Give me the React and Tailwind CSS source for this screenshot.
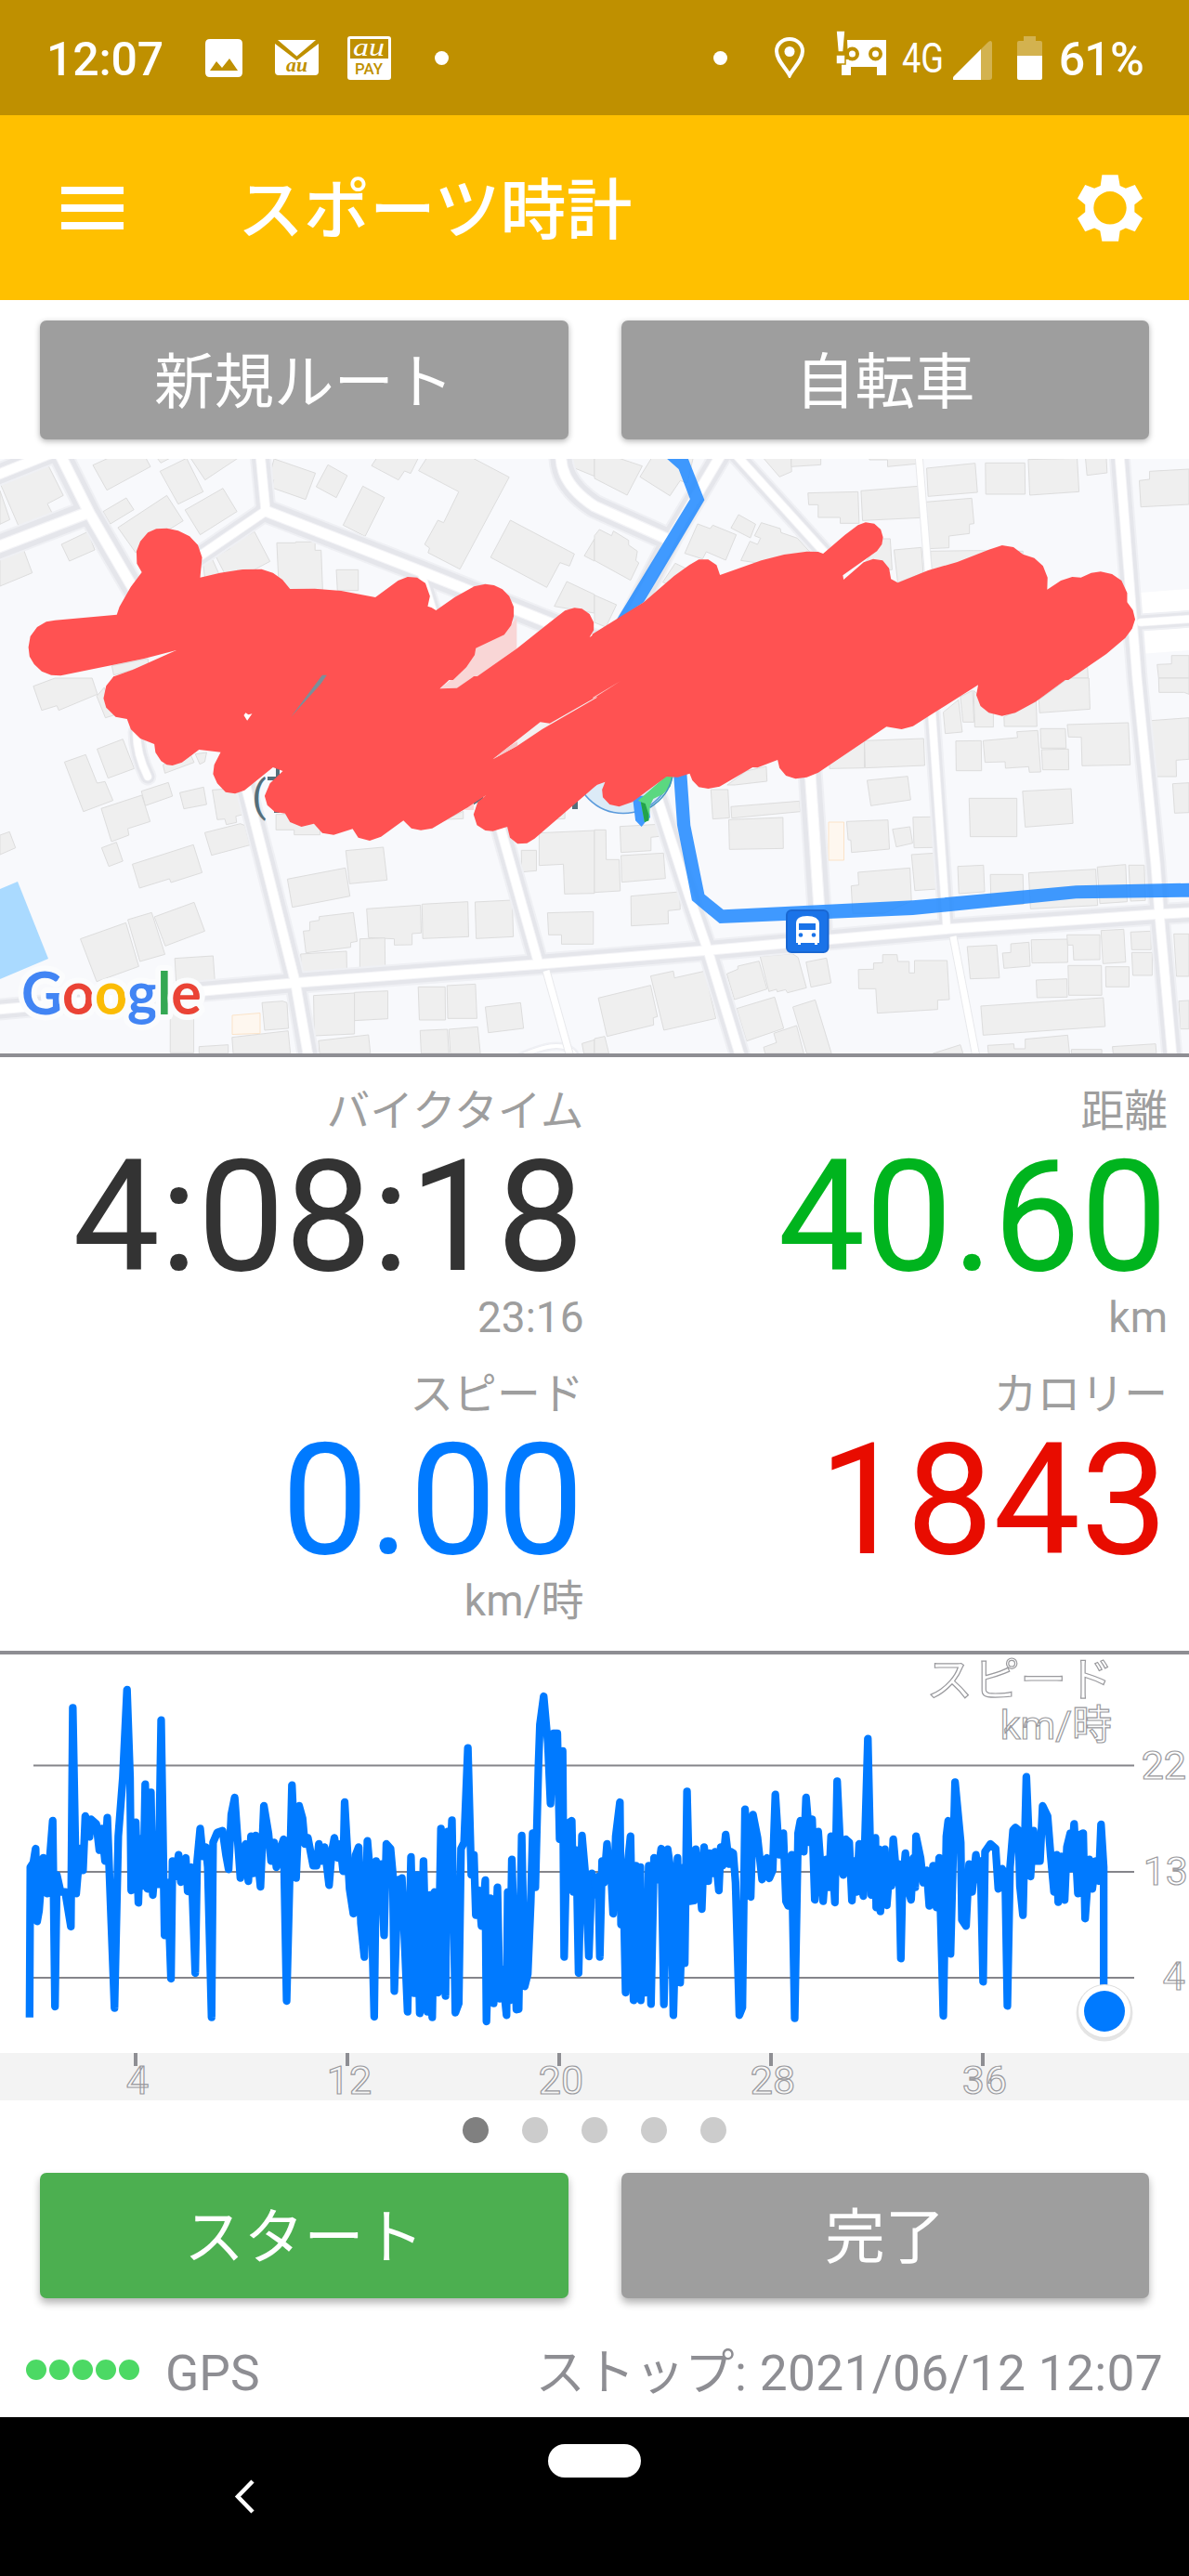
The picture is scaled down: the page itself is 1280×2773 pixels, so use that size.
import { Fragment } from 'react';

// Map shapes are stored per tile, tile units are stretched: 2.45 x 3 per pixel
const TILES = {
  topLeft: 'translate(0 330) scale(0.40816 0.33333)',
  topRight: 'translate(640 330) scale(0.40816 0.33333)',
  bottomLeft: 'translate(0 730) scale(0.40816 0.33333)',
  bottomRight: 'translate(640 730) scale(0.40816 0.33333)',
};

const BUILDINGS = {
  topLeft: [
    '0,570 122,500 167,610 125,637 140,673 54,723',
    '0,595 26,688 0,703',
    '245,512 285,490 385,490 397,517 282,593',
    '415,490 448,490 424,505',
    '422,532 492,490 536,598 470,638',
    '503,490 627,490 541,560',
    '272,662 333,618 353,656 291,702',
    '311,714 440,610 483,692 420,740 358,795',
    '488,657 588,587 625,662 528,737',
    '162,768 232,727 250,786 183,822',
    '0,810 62,784 85,860 0,903',
    '569,806 606,782 606,770 671,727 712,823 640,870 600,880',
    '535,820 557,808 580,870 540,875',
    '723,492 832,538 806,623 717,585 722,560 709,553',
    '865,511 916,546 887,617 834,582',
    '957,580 1014,617 963,742 905,706',
    '980,514 993,490 1103,490 1083,539 1067,531 1051,560',
    '1104,530 1125,490 1248,490 1343,551 1213,848 1129,795 1133,780 1120,768 1155,690 1170,698 1210,598',
    '1346,690 1515,799 1502,838 1477,827 1442,907 1294,810',
    '1495,888 1568,930 1568,990 1462,968',
    '1568,750 1541,805 1568,822',
    '1502,515 1512,490 1568,490 1568,548',
    '730,763 780,763 780,760 831,760 831,787 847,787 851,915 736,915',
    '887,850 945,850 945,917 890,917',
    '295,1160 390,1137 392,1160 300,1190',
  ],
  topRight: [
    '0,555 0,490 65,490 126,515 86,609',
    '120,550 150,490 260,490 245,570 226,562 199,611',
    '0,740 13,720 45,740 50,725 90,755 90,770 113,790 109,820 117,828 95,884 0,820',
    '0,932 58,963 30,1035 0,1020',
    '272,702 305,717 312,706 374,737 346,819 295,792 285,815 238,797',
    '380,672 425,703 411,747 360,715',
    '440,698 490,717 492,730 535,748 570,795 440,830 386,820 410,758 430,768 438,748 422,740',
    '180,890 213,829 240,845 200,900',
    '446,490 518,490 520,533 488,550',
    '519,490 597,490 597,511 519,517',
    '725,495 773,495 773,517 850,508 850,490 725,490',
    '563,602 695,598 698,700 648,700 648,681 590,681 590,640 565,640',
    '703,595 854,580 859,682 707,691',
    '876,522 1004,506 1010,600 880,613',
    '1031,505 1135,505 1136,606 1032,606',
    '1144,494 1273,490 1278,598 1148,609',
    '1295,490 1350,490 1352,537 1299,545',
    '874,631 995,619 1001,701 989,703 989,733 935,741 935,779 880,782',
    '1568,525 1464,532 1464,558 1437,562 1441,647 1568,639',
    '760,750 780,750 785,850 700,850',
    '790,786 862,778 867,860 800,892',
    '886,790 1001,788 1130,790 1130,830 890,850',
    '1568,1127 1522,1127 1522,1154 1484,1156 1488,1200 1568,1200',
    '1300,1160 1302,1200 1250,1200',
  ],
  bottomLeft: [
    '88,26 145,0 243,0 257,52 155,104 150,89 110,104',
    '255,58 275,30 300,120 278,128',
    '256,229 324,197 354,292 285,323',
    '170,271 226,247 256,339 277,334 298,395 220,431',
    '373,365 444,337 455,381 383,412',
    '267,421 374,378 396,463 337,486 340,507 294,528',
    '268,548 307,530 324,591 287,608',
    '0,507 25,496 41,548 0,570',
    '474,370 537,352 545,408 485,422',
    '430,280 500,240 512,272 435,307',
    '515,245 545,240 540,270 527,278',
    '560,361 635,355 642,440 622,446 624,466 597,473 593,455 573,457',
    '540,499 634,470 646,476 659,539 558,572',
    '349,601 510,538 533,628 451,660 447,648 368,678',
    '212,842 332,790 366,931 255,980',
    '337,780 400,757 435,892 369,915',
    '407,771 512,724 540,817 436,865',
    '461,905 562,897 567,985 465,990',
    '449,1075 511,1070 511,1210 449,1210',
    '525,1190 602,1184 602,1212 525,1212',
    '691,1048 745,1043 757,1048 761,1131 698,1137',
    '612,1160 760,1139 766,1212 615,1212',
    '827,1025 935,1017 935,1149 829,1155',
    '935,1015 1023,1010 1023,1100 935,1106',
    '840,1171 972,1152 977,1212 843,1212',
    '1103,997 1174,997 1175,1104 1106,1104',
    '1179,993 1254,988 1258,1099 1181,1099',
    '1108,1138 1180,1134 1184,1212 1111,1212',
    '1184,1134 1260,1126 1267,1212 1188,1212',
    '1280,1062 1373,1048 1381,1131 1288,1145',
    '1535,1180 1568,1168 1568,1212 1540,1212',
    '912,557 1011,546 1021,652 922,664',
    '758,649 911,613 923,704 771,740',
    '800,817 817,815 817,787 842,782 842,770 932,757 942,850 925,854 925,869 807,887',
    '793,891 914,882 915,950 795,955',
    '967,745 1109,733 1111,823 1087,825 1087,861 1040,862 1040,842 972,838',
    '949,842 1015,839 1016,941 949,941',
    '1113,730 1234,722 1236,835 1115,841',
    '1253,723 1351,717 1354,835 1256,841',
    '1375,556 1415,556 1415,622 1376,626',
    '1422,500 1568,492 1568,695 1489,697 1486,601 1422,605',
    '1444,758 1565,754 1565,859 1481,859 1481,829 1447,829',
    '728,440 830,440 844,490 844,506 776,506 776,490 728,490',
    '1150,470 1222,430 1222,454 1180,456',
    '1440,480 1490,430 1490,454 1460,456',
  ],
  bottomRight: [
    '0,490 30,490 31,586 65,586 68,687 0,692',
    '67,479 170,472 171,511 149,514 149,557 70,563',
    '70,573 182,565 187,647 72,659',
    '96,704 225,690 226,747 194,751 195,793 97,800',
    '307,360 352,360 356,451 312,455',
    '360,415 541,397 543,431 362,452',
    '354,457 497,450 498,550 356,553',
    '350,345 400,300 453,285 455,333 370,345',
    '719,330 826,317 834,393 729,412',
    '620,292 620,270 712,200 712,290',
    '712,202 868,195 871,282 714,290',
    '665,463 774,458 778,552 678,563 676,523 669,522',
    '786,488 832,480 839,533 796,545',
    '840,449 892,448 895,547 843,548',
    '836,570 897,565 905,681 845,686',
    '677,671 697,668 695,627 832,613 836,720 763,760 681,760',
    '953,203 1020,202 1021,299 954,299',
    '1025,202 1116,192 1114,173 1169,169 1177,303 1147,304 1145,286 1084,291 1083,270 1030,272',
    '1176,163 1242,163 1244,226 1178,226',
    '1179,231 1250,229 1251,296 1182,296',
    '1247,150 1408,144 1413,280 1286,283 1284,191 1250,190',
    '920,110 960,70 970,174 925,179',
    '965,60 997,40 1001,142 972,142',
    '1000,40 1052,100 1052,158 1003,158',
    '1080,125 1165,75 1167,156 1081,156',
    '1172,70 1250,0 1304,0 1307,100 1174,112',
    '1488,0 1568,0 1568,52 1555,46 1489,46',
    '1468,137 1568,128 1568,262 1534,265 1535,318 1477,318',
    '1525,341 1568,338 1568,434 1530,436',
    '988,388 1114,388 1114,512 991,512',
    '1129,365 1257,357 1262,469 1136,481',
    '958,608 1026,604 1029,690 961,696',
    '1044,634 1130,634 1132,730 1046,735',
    '1145,629 1322,617 1327,734 1150,745',
    '1326,610 1401,602 1405,722 1333,728',
    '1409,604 1450,604 1453,718 1414,720',
    '983,867 1061,862 1068,968 991,971',
    '1076,888 1098,886 1098,858 1146,853 1149,930 1080,937',
    '1152,845 1248,843 1248,918 1154,920',
    '1246,829 1333,829 1333,909 1264,910 1262,862 1248,862',
    '1336,815 1396,811 1401,917 1341,922',
    '1414,820 1468,817 1468,877 1417,877',
    '1417,886 1471,886 1471,960 1420,960',
    '1348,932 1410,932 1410,997 1349,997',
    '1249,928 1337,928 1338,1024 1251,1024',
    '1165,975 1246,971 1247,1030 1167,1032',
    '1019,1059 1342,1032 1347,1125 1025,1153',
    '1037,1186 1106,1181 1107,1197 1136,1197 1136,1166 1248,1153 1253,1212 1039,1212',
    '1258,1199 1338,1199 1338,1212 1258,1212',
    '1366,1190 1480,1181 1482,1212 1368,1212',
    '1528,826 1568,826 1568,963 1535,963',
    '1541,1043 1568,1041 1568,1133 1545,1133',
    '893,1212 965,1184 972,1212',
    '696,941 736,940 736,920 760,919 760,893 798,893 800,915 830,915 830,952 844,952 844,912 930,912 936,1038 905,1040 905,1070 746,1082 742,1003 697,1003',
    '349,955 378,940 378,930 434,914 455,1004 369,1038',
    '437,899 522,890 537,902 559,1000 509,1016 504,1006 482,1013 480,1005 460,1012',
    '558,917 612,904 624,984 571,998',
    '375,1067 475,1030 499,1131 401,1172',
    '523,1062 582,1039 625,1212 560,1212',
    '446,1192 480,1177 473,1147 533,1122 552,1212 450,1212',
    '148,962 208,946 211,968 291,946 320,1099 183,1137',
    '10,1033 148,992 166,1093 155,1097 156,1120 33,1157',
    '0,1164 27,1157 38,1212 0,1212',
  ],
};

const ROADS = [
  { d: 'M-5 590 L94 552', w: 30 },
  { d: 'M-5 512 L60 486', w: 26 },
  { d: 'M64 488 L96 552 L150 645', w: 28 },
  { d: 'M280 488 L286 550', w: 24 },
  { d: 'M286 550 L453 615 L640 690', w: 28 },
  { d: 'M453 615 L470 670', w: 20 },
  { d: 'M286 550 L210 602', w: 24 },
  { d: 'M604 488 Q602 520 640 545 L718 580', w: 28 },
  { d: 'M777 488 L724 577 L640 740', w: 26 },
  { d: 'M791 488 L895 603', w: 22 },
  { d: 'M1205 488 L1224 730 L1244 930 L1248 983 L1262 1138', w: 24 },
  { d: 'M1228 670 L1285 666', w: 20 },
  { d: 'M1003 765 L1019 995', w: 20 },
  { d: 'M-5 1087 L318 1058 L580 1038 L762 1023 L1020 1000 L1248 984 L1285 982', w: 25 },
  { d: 'M263 840 L286 930 L318 1058 L332 1138', w: 25 },
  { d: 'M537 885 L580 1038', w: 24 },
  { d: 'M705 850 L742 965 L762 1023 L797 1138', w: 24 },
  { d: 'M872 830 L884 1010', w: 28 },
  { d: 'M147 788 Q147 812 159 836', w: 20 },
  { d: 'M555 1140 Q610 1112 622 1140', w: 10 },
];

const LANES = ['M989 488 L1000 625', 'M588 1045 L614 1138', 'M1026 1008 L1051 1138'];

const SCRIBBLE = {
  topLeft: [
    '295,1206 300,1195 350,1173 465,1110 380,1137 160,1192 135,1190 110,1178 90,1155 78,1130 75,1100 80,1065 98,1035 122,1018 145,1013 308,995 315,970 345,905 374,858 361,830 360,790 370,758 390,730 412,718 440,716 470,724 500,742 522,770 533,810 528,875 580,860 640,849 690,848 720,860 745,882 765,912 830,911 900,918 990,939 1050,885 1075,873 1100,875 1122,893 1134,935 1128,968 1138,972 1150,981 1200,938 1250,904 1280,896 1303,900 1325,913 1343,935 1355,970 1355,1000 1348,1030 1330,1060 1255,1103 1252,1125 1230,1165 1195,1206',
    '1245,1206 1363,1105 1450,1020 1490,982 1515,973 1535,976 1555,993 1566,1020 1566,1045 1555,1068 1574,1052 1574,1206',
  ],
  topRight: [
    '-6,1058 55,1012 130,955 210,870 250,835 275,817 300,817 322,835 331,867 440,820 500,801 560,791 590,792 603,798 660,738 695,706 715,697 738,701 755,720 761,745 758,768 745,790 655,868 657,882 710,826 735,815 760,820 777,845 782,880 800,892 880,852 957,825 1040,785 1075,771 1105,777 1130,800 1160,812 1183,838 1195,875 1194,914 1230,885 1260,873 1283,875 1310,860 1335,856 1365,864 1390,885 1405,925 1405,955 1420,980 1426,1010 1418,1040 1400,1070 1350,1122 1250,1206 -6,1206',
  ],
  bottomLeft: [
    '300,-6 280,25 273,65 280,95 305,125 335,132 345,165 370,195 407,213 410,240 425,268 440,280 455,282 480,272 525,231 582,239 565,280 562,310 573,340 595,368 620,373 645,362 720,288 746,300 712,340 698,380 705,410 725,432 752,437 765,465 795,480 828,470 850,500 880,506 930,487 945,515 975,525 1005,512 1064,460 1085,485 1110,491 1140,485 1230,420 1283,377 1260,400 1249,440 1258,475 1280,492 1300,494 1338,480 1345,515 1365,535 1390,533 1410,518 1574,345 1574,-6 1250,-6 1205,32 1160,34 1195,-6',
  ],
  bottomRight: [
    '-6,-6 1255,-6 1165,75 1110,112 1075,122 1040,112 1018,90 1007,55 1012,22 885,120 840,155 810,165 770,157 590,305 560,320 530,325 505,315 488,290 483,264 430,289 417,288 330,350 300,357 275,352 258,330 251,308 220,320 190,318 100,400 65,415 40,408 22,385 20,360 28,335 -6,350',
  ],
};

const SPEED_LEFT =
  '78,1205 80,720 88,705 94,660 98,895 103,860 114,690 124,805 139,570 145,1170 150,745 160,800 172,800 178,845 187,912 192,205 201,805 211,660 219,730 225,555 236,622 240,565 254,580 262,665 268,595 277,700 283,560 302,1175 312,620 324,430 335,147 343,430 346,795 358,575 365,835 370,630 378,780 383,452 389,790 398,478 403,810 413,650 418,775 425,245 434,940 442,770 451,1080 455,700 463,750 471,680 477,768 490,690 495,798 505,720 515,1062 520,700 528,595 535,685 543,655 548,720 558,1205 562,640 573,608 587,602 596,680 603,727 610,550 619,495 634,755 648,645 655,765 662,620 668,740 674,618 687,783 696,522 708,610 715,700 723,640 729,720 738,665 748,630 756,1152 770,455 781,755 789,522 798,562 804,645 812,625 826,715 835,715 841,645 848,700 856,655 868,778 875,670 882,625 890,690 897,645 905,733 909,510 922,790 932,870 938,680 946,655 952,902 961,1010 969,635 978,765 987,1203 992,700 1003,760 1005,710 1013,940 1019,645 1030,660 1036,740 1040,1120 1050,760 1058,880 1060,755 1075,1187 1084,687 1092,1127 1100,745 1107,1192 1117,700 1127,1187 1134,810 1140,1205 1146,800 1155,1125 1163,595 1168,760 1175,1136 1180,605 1186,750 1192,568 1201,1190 1210,1160 1216,660 1224,640 1234,335 1243,745 1250,680 1255,875 1262,795 1270,910 1280,762 1283,1218 1293,820 1302,1160 1312,785 1318,1145 1324,1050 1336,1198 1339,800 1344,1150 1350,695 1362,1180 1368,1178 1376,618 1384,1105 1392,1065 1400,830 1405,610 1412,785 1420,400 1424,260 1434,168 1445,320 1452,515 1460,288 1470,288 1476,630 1484,345 1488,1010 1496,580 1508,570 1512,800 1520,665 1526,1062 1535,618 1545,760 1553,1008 1561,740 1570,810';

const SPEED_RIGHT =
  '0,750 5,810 10,750 14,1010 20,700 25,770 33,645 40,750 42,700 49,870 56,620 67,510 70,905 76,770 82,1125 87,715 95,620 103,1150 109,715 114,1128 121,720 122,1150 132,800 135,1125 143,715 149,1162 157,690 165,760 176,660 183,1163 193,662 202,740 208,1198 219,690 226,1093 236,720 238,1030 244,475 251,830 262,828 267,662 275,750 283,855 289,655 300,765 303,675 310,740 318,670 328,795 333,655 338,715 346,615 355,710 360,670 366,675 372,770 382,1198 390,1173 397,533 412,816 418,550 430,625 442,760 455,690 461,756 470,730 477,485 487,680 498,610 505,830 511,845 520,680 528,1208 537,610 543,570 552,670 558,495 568,640 574,565 581,825 590,605 603,830 611,695 618,785 624,620 634,834 640,442 650,700 656,745 663,630 672,640 679,828 685,700 692,800 698,645 709,813 721,305 730,810 741,625 743,850 750,662 754,863 766,662 771,843 780,700 783,780 788,630 798,770 803,710 808,1015 812,790 820,675 828,795 835,825 841,690 846,785 848,620 860,690 867,770 876,730 883,845 893,715 902,850 909,690 920,1200 928,620 933,570 939,1000 951,445 966,640 969,890 980,910 988,710 996,800 1006,680 1013,760 1018,700 1025,1090 1030,670 1044,645 1058,660 1065,790 1075,725 1083,740 1089,1168 1096,720 1104,600 1110,592 1118,600 1122,780 1130,875 1139,428 1150,750 1158,602 1166,700 1175,700 1182,522 1195,555 1203,680 1212,800 1219,680 1223,833 1231,685 1240,826 1246,655 1255,610 1256,725 1265,580 1275,805 1280,615 1289,610 1294,886 1305,695 1313,790 1322,700 1330,765 1336,582 1343,720 1343,1120';

const StatusBar = () => (
  <div className="flex h-[124px] items-center bg-[#bf9000] text-white">
    <span className="ml-[50px] w-[171px] pt-[4px] text-[50px] leading-[60px] font-medium tracking-[-0.2px]">12:07</span>

    {/* Notifications */}
    <svg className="h-[41px] w-[40px]" viewBox="0 0 40 41">
      <path fill="#fff" fillRule="evenodd" d="M5 0h30q5 0 5 5v31q0 5-5 5H5q-5 0-5-5V5q0-5 5-5zM5 34h30L26 21l-8 10-6-7z" />
    </svg>
    <svg className="ml-[35px] h-[38px] w-[47px] overflow-visible" viewBox="0 0 47 38">
      <path fill="#fff" d="M3 0h41L23.5 17.500zM0 4l23.500 18L47 4v30q0 4-4 4H4q-4 0-4-4z" />
      <text x="12" y="34" fill="#bf9000" textLength="23" lengthAdjust="spacingAndGlyphs" className="font-['Liberation_Serif',serif] text-[20px] font-bold italic">au</text>
    </svg>
    <svg className="ml-[31px] h-[47px] w-[47px] overflow-visible" viewBox="0 0 47 47">
      <rect width="47" height="47" rx="3" fill="#fff" />
      <rect x="3" y="3" width="41" height="21" fill="#bf9000" />
      <text x="6" y="20.500" fill="#fff" textLength="34" lengthAdjust="spacingAndGlyphs" className="font-['Liberation_Serif',serif] text-[27px] italic">au</text>
      <text x="8" y="41" fill="#bf9000" textLength="30" lengthAdjust="spacingAndGlyphs" className="text-[17px] font-medium">PAY</text>
    </svg>
    <span className="ml-[47px] h-[15px] w-[15px] rounded-full bg-white" />

    <span className="mr-[51px] ml-auto h-[15px] w-[15px] rounded-full bg-white" />
    {/* Location */}
    <svg className="mr-[34px] h-[44px] w-[32px]" viewBox="0 0 32 44">
      <path fill="none" stroke="#fff" strokeWidth="4" d="M16 41C12 33 2 25 2 15a14 13 0 0 1 28 0c0 10-10 18-14 26z" />
      <circle cx="16" cy="15.500" r="5.500" fill="#fff" />
    </svg>
    {/* Driving mode */}
    <svg className="mr-[17px] mb-[9px] h-[49px] w-[54px]" viewBox="0 0 54 49">
      <path fill="#fff" d="M12 10h42v38H44v-9H16v9H6V31h7z" />
      <circle cx="17.500" cy="25" r="5.500" fill="#fff" stroke="#bf9000" strokeWidth="4" />
      <circle cx="42.500" cy="25" r="5.500" fill="#fff" stroke="#bf9000" strokeWidth="4" />
      <path fill="#fff" stroke="#bf9000" strokeWidth="1.500" d="M0 0h10L8 23H2zM0 26h10v10H0z" />
    </svg>
    <svg className="mr-[10px] h-[40px] w-[45px] overflow-visible" viewBox="0 0 45 40">
      <text x="0" y="36" fill="#fff" textLength="45" lengthAdjust="spacingAndGlyphs" className="text-[45px]">4G</text>
    </svg>
    <svg className="mt-[5px] mr-[27px] h-[42px] w-[42px]" viewBox="0 0 42 42">
      <path fill="#d3b24f" d="M42 2v37q0 3-3 3H2q-4 0-1-4L37 2q4-4 5 0z" />
      <path fill="#fff" d="M30 9v33H2q-4 0-1-4z" />
    </svg>
    <svg className="mr-[18px] h-[47px] w-[27px]" viewBox="0 0 27 47">
      <path fill="#d3b24f" d="M7 0h13v5h5q2 0 2 2v15H0V7q0-2 2-2h5z" />
      <path fill="#fff" d="M0 21h27v24q0 2-2 2H2q-2 0-2-2z" />
    </svg>
    <span className="mr-[49px] pt-[4px] text-[50px] leading-[60px] font-medium tracking-[-0.8px]">61%</span>
  </div>
);

const AppBar = () => (
  <div className="flex h-[199px] items-center bg-[#ffc000] text-white">
    <div className="ml-[66px] flex w-[67px] flex-col gap-[11px]">
      <span className="h-[8px] bg-white" />
      <span className="h-[8px] bg-white" />
      <span className="h-[8px] bg-white" />
    </div>
    <h1 className="ml-[123px] pt-[6px] text-[71px] leading-[90px] font-medium">スポーツ時計</h1>
    <svg className="mr-[50px] ml-auto h-[72px] w-[70px]" viewBox="1274 564 170 215" preserveAspectRatio="none">
      <path
        fill="#fff"
        fillRule="evenodd"
        d="M1338 565H1380L1385 600L1400 608L1424 597L1444 640L1423 660V684L1444 704L1424 747L1400 736L1385 745L1381 778H1338L1333 745L1318 736L1294 747L1274 704L1294 684V660L1274 640L1294 597L1318 608L1334 600ZM1316 671A43 53 0 0 0 1402 671A43 53 0 0 0 1316 671Z"
      />
    </svg>
  </div>
);

const BigButton = ({ children, className }) => (
  <button className={`flex-1 rounded-[7px] pt-[6px] text-[64.5px] text-white ${className}`}>{children}</button>
);

const BusStop = () => (
  <g>
    <rect x="847" y="980" width="44.500" height="45" rx="5" fill="#1a73e8" stroke="#1967d2" strokeWidth="2" />
    <path fill="#fff" d="M857 994q0-8 12-8t13 8v21h-2v2h-3v-2h-15v2h-3v-2h-2z" />
    <path fill="#1a73e8" d="M860 994h18v7h-18z" />
    <circle cx="862" cy="1006.500" r="2.300" fill="#1a73e8" />
    <circle cx="876" cy="1006.500" r="2.300" fill="#1a73e8" />
  </g>
);

const RouteMap = () => (
  <svg className="block h-[640px] w-full bg-[#f8f9fc]" viewBox="0 494 1280 640">
    {/* Buildings */}
    {Object.entries(BUILDINGS).map(([tile, shapes]) => (
      <g key={tile} transform={TILES[tile]} fill="#efefef" stroke="#dddddd">
        {shapes.map((points) => (
          <polygon key={points} points={points} vectorEffect="non-scaling-stroke" />
        ))}
      </g>
    ))}
    <g fill="#fef7ef" stroke="#fbe3c8">
      <path d="M250 1093l30-2.500v22l-30 1z" />
      <path d="M892 885h16.500v41H892z" />
    </g>
    <path fill="#aadaff" d="M0 957L19 949L52 1032L0 1054Z" />

    {/* Roads */}
    <path fill="#fff" d="M1228 638L1280 634V700L1228 704Z" />
    <g fill="none" stroke="#eff0f4" strokeLinejoin="round">
      {ROADS.map((r) => <path key={r.d} d={r.d} strokeWidth={r.w - 1} strokeLinecap="round" />)}
    </g>
    <g fill="none" stroke="#e5e6eb" strokeLinejoin="round">
      {ROADS.map((r) => <path key={r.d} d={r.d} strokeWidth={r.w - 5} strokeLinecap="round" />)}
    </g>
    <g fill="none" stroke="#f4f4f7" strokeLinejoin="round">
      {ROADS.map((r) => <path key={r.d} d={r.d} strokeWidth={r.w * 0.46} strokeLinecap="round" />)}
    </g>
    <g fill="none" stroke="#fff" strokeLinejoin="round">
      {ROADS.map((r) => <path key={r.d} d={r.d} strokeWidth={r.w * 0.38} strokeLinecap="round" />)}
    </g>
    {LANES.map((d) => (
      <Fragment key={d}>
        <path d={d} fill="none" stroke="#e8e9ec" strokeWidth="9" />
        <path d={d} fill="none" stroke="#fff" strokeWidth="7" />
      </Fragment>
    ))}

    {/* Place label */}
    <g fill="#546e7a">
      <text x="271" y="873" className="text-[46px]">(</text>
      <path d="M288 836h14v4h-14zM297 826h4v12h-4zM295 870h6v5h-6zM616 858h6v13h-6zM500 868l20-14v6l-16 10z" />
    </g>

    {/* Position and accuracy circle */}
    <circle cx="671" cy="823" r="52.500" fill="#dcebf7" stroke="#5b9bdc" strokeWidth="1.500" />
    <g transform={TILES.bottomRight}>
      <path fill="#4099ff" d="M100 380L140 380L147 450L134 465L124 480L108 460Z" />
      <path fill="#5bd880" d="M115 395L190 315H208L200 350L180 375L155 390L147 410L143 460L132 465L122 400Z" />
      <path fill="#23a34a" d="M122 400L134 405L143 440L143 460L132 465Z" />
      <path fill="none" stroke="#3f93c0" strokeWidth="1.500" vectorEffect="non-scaling-stroke" d="M205 320Q195 380 146 418" />
    </g>

    {/* Route */}
    <g fill="#2189ff" fillOpacity="0.86">
      <path transform={TILES.topRight} d="M185 485L222 525L252 622L55 1018L130 955L290 625L245 485Z" />
      <path transform={TILES.bottomRight} d="M208 300H243L253 475L290 698L340 748L840 718L1270 670L1572 662V707L1270 712L840 765L330 792L257 718L218 475Z" />
    </g>
    <BusStop />

    {/* Scribble */}
    <path transform={TILES.topLeft} fill="#f9d6d6" d="M1363 1005V1110L1245 1206H1190L1250 1103L1330 1050Z" />
    <path fill="#f9d6d6" d="M474 741L490 728H511L492 741ZM500 872L515 858H510V872Z" />
    <g fill="#ff5252">
      {Object.entries(SCRIBBLE).map(([tile, shapes]) => (
        <g key={tile} transform={TILES[tile]}>
          {shapes.map((points) => <polygon key={points} points={points} />)}
        </g>
      ))}
    </g>
    <g transform={TILES.bottomLeft}>
      <path fill="#f4f0f1" d="M1300 262L1425 142L1450 146L1574 60V63L1430 165L1365 218Z" />
      <path fill="#f3c9cb" d="M1300 262L1345 218L1365 205V218Z" />
      <path fill="#7a8f9a" d="M767 126L850 -10H862L845 20Z" />
      <path fill="#fff" d="M643 120L648 112L655 118L665 115L652 137Z" />
    </g>
    <path transform={TILES.bottomRight} fill="#fad5d5" d="M-4 62L68 10L-4 66Z" />

    <text
      x="23"
      y="1092"
      textLength="194"
      lengthAdjust="spacingAndGlyphs"
      stroke="#fbfcfd"
      strokeWidth="12"
      strokeLinejoin="round"
      paintOrder="stroke"
      className="font-['Lato',sans-serif] text-[64px] font-bold"
    >
      <tspan fill="#4285f4">G</tspan>
      <tspan fill="#ea4335">o</tspan>
      <tspan fill="#fbbc05">o</tspan>
      <tspan fill="#4285f4">g</tspan>
      <tspan fill="#34a853">l</tspan>
      <tspan fill="#ea4335">e</tspan>
    </text>
  </svg>
);

const Metric = ({ label, value, unit, color }) => (
  <div className="h-[305px] pt-[28px] text-right text-[#9e9e9e]">
    <div className="text-[46.8px] leading-[60px]">{label}</div>
    <div className={`text-[167px] leading-[168px] ${color}`}>{value}</div>
    <div className="text-[46px] leading-[48px]">{unit}</div>
  </div>
);

const SpeedChart = () => (
  <svg className="block h-[480px] w-full overflow-visible" viewBox="0 1781 1280 480">
    {[1900.5, 2015, 2129].map((y) => (
      <path key={y} d={`M36 ${y}H1221`} stroke="#85858a" strokeWidth="2" />
    ))}
    <rect y="2210" width="1280" height="51" fill="#f3f3f3" />

    <g fill="none" stroke="#007aff" strokeWidth="8.300" strokeLinejoin="round">
      <polyline transform="translate(0 1770) scale(0.40816 0.33333)" points={SPEED_LEFT} vectorEffect="non-scaling-stroke" />
      <polyline transform="translate(640 1770) scale(0.40816 0.33333)" points={SPEED_RIGHT} vectorEffect="non-scaling-stroke" />
    </g>

    {/* Current point */}
    <circle cx="1189" cy="2167" r="30.500" fill="#000" fillOpacity="0.1" />
    <circle cx="1189" cy="2165" r="28.500" fill="#fff" stroke="#e0e0e0" />
    <circle cx="1189" cy="2165" r="22" fill="#007aff" />

    {/* Axis */}
    <g stroke="#9a9a9e" strokeWidth="1.200" className="text-[43px]">
      <g fill="#f6f6f6" textAnchor="middle">
        {[[4, 146], [12, 374], [20, 602], [28, 830], [36, 1058]].map(([km, x]) => (
          <Fragment key={km}>
            <path d={`M${x} 2210V2224`} stroke="#8e8e93" strokeWidth="4" />
            <text x={x + 2} y="2254">{km}</text>
          </Fragment>
        ))}
      </g>
      <g fill="#fff" textAnchor="end">
        <text x="1277" y="1915">22</text>
        <text x="1279" y="2029">13</text>
        <text x="1276" y="2142">4</text>
        <text x="1197" y="1872">km/時</text>
        <text x="1199" y="1826" className="text-[50.5px]">スピード</text>
      </g>
    </g>
  </svg>
);

const App = () => {
  return (
    <div className="flex h-[2773px] w-[1280px] flex-col overflow-hidden bg-white font-['Roboto','Noto_Sans_CJK_JP',sans-serif]">
      <StatusBar />
      <AppBar />

      <div className="flex h-[171px] gap-[57px] px-[43px] pt-[22px] pb-[21px]">
        <BigButton className="bg-[#9e9e9e] shadow-[0_2px_6px_rgba(0,0,0,0.3)]">新規ルート</BigButton>
        <BigButton className="bg-[#9e9e9e] shadow-[0_2px_6px_rgba(0,0,0,0.3)]">自転車</BigButton>
      </div>

      <RouteMap />

      {/* Metrics */}
      <div className="grid h-[647px] grid-cols-2 content-start border-y-4 border-[#8e8e93] pr-[23px]">
        <Metric label="バイクタイム" value="4:08:18" unit="23:16" color="text-[#333333]" />
        <Metric label="距離" value="40.60" unit="km" color="text-[#00b41e]" />
        <Metric label="スピード" value="0.00" unit="km/時" color="text-[#007aff]" />
        <Metric label="カロリー" value="1843" unit="" color="text-[#e80c00]" />
      </div>

      <SpeedChart />

      {/* Pager */}
      <div className="flex h-[64px] items-center justify-center gap-[36px]">
        <span className="h-[28px] w-[28px] rounded-full bg-[#808080]" />
        <span className="h-[28px] w-[28px] rounded-full bg-[#cccccc]" />
        <span className="h-[28px] w-[28px] rounded-full bg-[#cccccc]" />
        <span className="h-[28px] w-[28px] rounded-full bg-[#cccccc]" />
        <span className="h-[28px] w-[28px] rounded-full bg-[#cccccc]" />
      </div>

      <div className="flex h-[183px] gap-[57px] px-[43px] pt-[14px] pb-[34px]">
        <BigButton className="bg-[#4caf50] shadow-[0_5px_8px_rgba(0,0,0,0.3)]">スタート</BigButton>
        <BigButton className="bg-[#9e9e9e] shadow-[0_5px_8px_rgba(0,0,0,0.3)]">完了</BigButton>
      </div>

      {/* GPS row */}
      <div className="flex h-[94px] items-center text-[53.3px] leading-[60px] text-[#8e8e93]">
        <div className="mb-[8px] ml-[28px] flex gap-[3px]">
          <span className="h-[22px] w-[22px] rounded-full bg-[#4cd964]" />
          <span className="h-[22px] w-[22px] rounded-full bg-[#4cd964]" />
          <span className="h-[22px] w-[22px] rounded-full bg-[#4cd964]" />
          <span className="h-[22px] w-[22px] rounded-full bg-[#4cd964]" />
          <span className="h-[22px] w-[22px] rounded-full bg-[#4cd964]" />
        </div>
        <span className="ml-[28px]">GPS</span>
        <span className="mr-[28px] ml-auto tracking-[0.3px]">ストップ: 2021/06/12 12:07</span>
      </div>

      {/* Navigation bar */}
      <div className="flex flex-1 items-start bg-black">
        <svg className="mt-[67px] ml-[252px] h-[37px] w-[22px]" viewBox="0 0 22 37">
          <path d="M20 2L4 18.500L20 35" fill="none" stroke="#fff" strokeWidth="4.500" />
        </svg>
        <span className="mt-[29px] ml-[316px] h-[36px] w-[100px] rounded-full bg-white" />
      </div>
    </div>
  );
};

export default App;
